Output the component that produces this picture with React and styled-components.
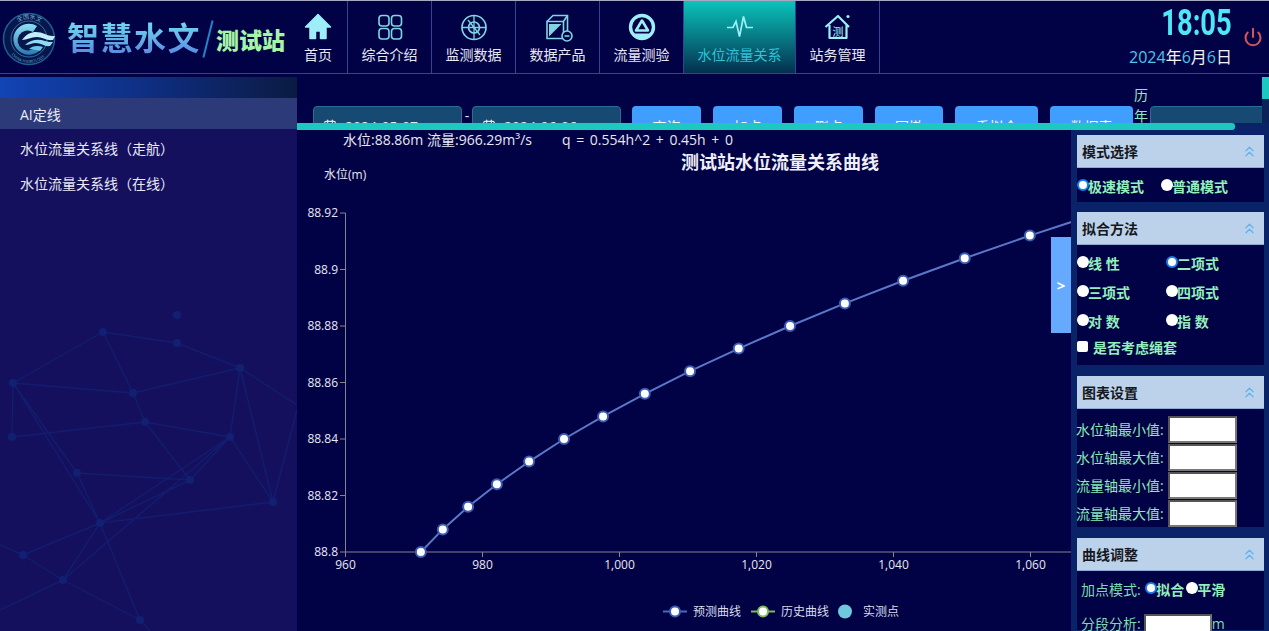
import React from 'react';
import styled, { createGlobalStyle } from 'styled-components';
import { Power, ChevronsUp, CalendarDays } from 'lucide-react';

const CJK = `"Open Sans", "Noto Sans CJK SC", sans-serif`;

const GlobalStyle = createGlobalStyle`
  html, body {
    margin: 0;
    height: 100%;
    overflow: hidden;
    background: #010145;
  }
  #root { height: 100%; }
  * { box-sizing: border-box; }
`;

const Page = styled.div`
  display: flex;
  flex-direction: column;
  height: 631px;
  font-family: ${CJK};
  color: #e6e8f4;
  background: #010145;
`;

/* header */
const Header = styled.header`
  display: flex;
  flex: none;
  height: 74px;
  border-top: 1px solid #a9a9c4;
  border-bottom: 1px solid #2b478f;
`;

const Brand = styled.div`
  display: flex;
  align-items: center;
  width: 302px;
  padding: 2px 0 0 1px;
`;

const BrandName = styled.div`
  margin-left: 10px;
  font-size: 32px;
  line-height: 40px;
  font-weight: 700;
  letter-spacing: 1.5px;
  white-space: nowrap;
  background: linear-gradient(180deg, #6fd6ee 15%, #5c8fe2 85%);
  -webkit-background-clip: text;
  background-clip: text;
  color: transparent;
`;

const Slash = styled.span`
  width: 2px;
  height: 38px;
  margin: 2px 0 0 6px;
  background: #1f86c8;
  transform: rotate(14deg);
`;

const Station = styled.div`
  margin: 4px 0 0 7px;
  font-size: 23px;
  line-height: 30px;
  font-weight: 900;
  white-space: nowrap;
  color: #a4f5a8;
`;

const Nav = styled.nav`
  display: flex;
`;

const NavItem = styled.div`
  display: flex;
  flex-direction: column;
  align-items: center;
  width: ${p => (p.$home ? 46 : p.$active ? 112 : 84)}px;
  padding: ${p => (p.$home ? '11px 13px 0 0' : '11px 0 0')};
  border-right: 1px solid #2b478f;
  font-size: 14px;
  line-height: 20px;
  white-space: nowrap;
  color: ${p => (p.$active ? '#2cc4d8' : '#e6e8f4')};
  background: ${p => (p.$active ? 'linear-gradient(180deg, #0ac4ba 0%, #04304f 100%)' : 'none')};
`;

const NavIcon = styled.svg`
  flex: none;
  width: 30px;
  height: 30px;
  margin-bottom: 3px;
  color: #9deef8;
`;

const Clock = styled.div`
  display: flex;
  flex-direction: column;
  align-items: flex-end;
  margin-left: auto;
  padding: 3px 37px 0 0;
  position: relative;
`;

const Time = styled.div`
  font-family: Roboto, sans-serif;
  font-size: 36px;
  line-height: 39px;
  font-weight: 700;
  color: #4fe6f6;
  transform: scaleX(0.76);
  transform-origin: right center;
`;

const DateText = styled.div`
  margin-top: 3px;
  font-size: 16px;
  line-height: 22px;
  white-space: nowrap;
  color: #f0f2f8;
  b { font-weight: 400; color: #49c6ee; }
`;

const PowerBtn = styled.span`
  position: absolute;
  right: 6px;
  top: 26px;
  display: flex;
  color: #d8545a;
`;

/* body */
const Body = styled.div`
  display: flex;
  flex: 1;
  min-height: 0;
`;

const Sidebar = styled.aside`
  position: relative;
  flex: none;
  width: 297px;
  margin-top: 3px;
  overflow: hidden;
  background: #14105e;
`;

const SideTop = styled.div`
  height: 21px;
  background: linear-gradient(90deg, #1244b4 0%, #0e2c7c 55%, #0a1a42 100%);
`;

const SideItem = styled.div`
  position: relative;
  height: ${p => (p.$active ? '31px' : '35px')};
  padding-left: 20px;
  font-size: 14px;
  line-height: ${p => (p.$active ? '33px' : '40px')};
  color: #e8eaf6;
  background: ${p => (p.$active ? '#2d3a7a' : 'none')};
`;

const Network = styled.svg`
  position: absolute;
  left: 0;
  bottom: 0;
  width: 297px;
  height: 331px;
`;

const Content = styled.main`
  position: relative;
  display: flex;
  flex: 1;
  flex-direction: column;
  min-width: 0;
`;

const Toolbar = styled.div`
  display: flex;
  flex: none;
  align-items: flex-start;
  height: 49px;
  padding: 32px 0 0 16px;
  overflow: hidden;
`;

const DateBox = styled.div`
  display: flex;
  flex: none;
  align-items: center;
  gap: 8px;
  width: 149px;
  height: 40px;
  padding-left: 9px;
  border: 1px solid #2a6c9c;
  border-radius: 4px;
  background: #164a72;
  font-size: 14px;
  color: #e4eaf2;
`;

const Dash = styled.span`
  flex: none;
  width: 10px;
  font-size: 14px;
  line-height: 20px;
  text-align: center;
`;

const ToolButton = styled.button`
  flex: none;
  width: ${p => p.$w}px;
  height: 40px;
  margin: ${p => p.$m || '0 0 0 12px'};
  border: 0;
  border-radius: 4px;
  background: #409eff;
  font: inherit;
  font-size: 14px;
  color: #fff;
`;

const YearLabel = styled.span`
  flex: none;
  width: 14px;
  margin: -22px 2px 0 1px;
  font-size: 14px;
  line-height: 21px;
  color: #8fe8b8;
`;

const YearSelect = styled.div`
  flex: none;
  width: 130px;
  height: 40px;
  border: 1px solid #2a6c9c;
  border-radius: 4px;
  background: #164a72;
`;

const HBar = styled.div`
  flex: none;
  height: 7px;
  background: #0a2268;
`;

const HThumb = styled.div`
  width: 938px;
  height: 7px;
  border-radius: 0 3px 3px 0;
  background: #1cc8c0;
`;

const VBar = styled.div`
  position: absolute;
  top: 3px;
  right: 0;
  width: 7px;
  height: 46px;
  background: #0b2258;
`;

const VThumb = styled.div`
  height: 22px;
  background: #1cc8c0;
`;

const Work = styled.div`
  display: flex;
  flex: 1;
  min-height: 0;
`;

const ChartPane = styled.section`
  position: relative;
  flex: 1;
  min-width: 0;
  overflow: hidden;
`;

const Info = styled.div`
  display: flex;
  height: 22px;
  padding: 0 0 0 46px;
  font-size: 14px;
  line-height: 20px;
  white-space: pre;
  color: #e6e8f4;
`;

const Formula = styled.span`
  margin-left: 30px;
  word-spacing: 2px;
`;

const ChartSvg = styled.svg`
  display: block;
  width: 774px;
  height: 479px;
  font-family: ${CJK};
`;

const Expand = styled.div`
  position: absolute;
  right: 0;
  top: 107px;
  display: flex;
  align-items: center;
  justify-content: center;
  width: 20px;
  height: 96px;
  background: #66aaff;
  font-size: 15px;
  font-weight: 700;
  color: #fff;
`;

/* right panel */
const Panel = styled.aside`
  flex: none;
  width: 198px;
  padding: 5px 5px 0 6px;
  overflow: hidden;
  background: #0a2268;
`;

const Section = styled.div`
  margin-bottom: ${p => p.$mb}px;
  background: #010145;
`;

const SectionHead = styled.div`
  display: flex;
  align-items: center;
  justify-content: space-between;
  height: 33px;
  padding: 0 6px 0 5px;
  border-bottom: 1px solid #8fa8d8;
  background: #bcd2ea;
  font-size: 14px;
  font-weight: 700;
  color: #151822;
  svg { color: #62b4f0; }
`;

const RadioRow = styled.div`
  display: grid;
  grid-template-columns: ${p => p.$cols};
  row-gap: ${p => p.$gap || 0}px;
  padding: ${p => p.$pad};
`;

const RadioLabel = styled.label`
  display: flex;
  align-items: flex-start;
  margin-left: ${p => p.$ml || 0}px;
  font-size: 14px;
  line-height: 20px;
  font-weight: 700;
  white-space: pre;
  color: #93f0bc;
`;

const Radio = styled.input.attrs({ type: 'radio' })`
  appearance: none;
  flex: none;
  width: 12px;
  height: 12px;
  margin: 2px -1px 0 0;
  border-radius: 50%;
  background: #fff;
  &:checked { border: 2px solid #1a7cf0; }
`;

const CheckRow = styled.label`
  display: flex;
  align-items: flex-start;
  gap: 5px;
  padding: 0 0 7px 0;
  font-size: 14px;
  line-height: 20px;
  font-weight: 700;
  color: #93f0bc;
`;

const Check = styled.input.attrs({ type: 'checkbox' })`
  appearance: none;
  flex: none;
  width: 11px;
  height: 11px;
  margin: 3px 0 0 0;
  border-radius: 2px;
  background: #fff;
`;

const Fields = styled.div`
  margin-left: -1px;
  padding-top: 6px;
`;

const FieldRow = styled.div`
  display: flex;
  align-items: center;
  height: 28px;
  font-size: 14px;
  white-space: nowrap;
  color: #88eab8;
`;

const NumInput = styled.input`
  flex: none;
  width: ${p => p.$w}px;
  height: 27px;
  margin-left: ${p => p.$ml}px;
  padding: 0;
  border: 2px solid #6a6a6e;
  border-color: #55555a #77777c #77777c #55555a;
  background: #fff;
`;

const AdjustRow = styled.div`
  display: flex;
  align-items: flex-start;
  padding: 9px 0 0 4px;
  font-size: 14px;
  line-height: 20px;
  white-space: pre;
  color: #7fdcb2;
`;

const SegmentRow = styled.div`
  display: flex;
  align-items: flex-start;
  height: 30px;
  padding: 14px 0 0 4px;
  font-size: 14px;
  line-height: 20px;
  white-space: nowrap;
  color: #7fdcb2;
`;

/* chart data, q / h */
const points = [
  [971.0, 88.8], [974.2, 88.808], [977.9, 88.816], [982.1, 88.824], [986.8, 88.832],
  [991.9, 88.84], [997.6, 88.848], [1003.7, 88.856], [1010.3, 88.864], [1017.4, 88.872],
  [1024.9, 88.88], [1032.9, 88.888], [1041.4, 88.896], [1050.4, 88.904], [1059.9, 88.912],
];
const px = q => 48.5 + (q - 960) * 6.85;
const py = h => 400 - (h - 88.8) * 2825;
const xTicks = [960, 980, 1000, 1020, 1040, 1060];
const yTicks = [88.8, 88.82, 88.84, 88.86, 88.88, 88.9, 88.92];
const linePath = points.map(([q, h]) => `${px(q)},${py(h)}`).join(' ') + ` ${px(1070)},${py(88.92)}`;

function Chart() {
  return (
    <ChartSvg viewBox="0 0 774 479">
      <text x="483" y="17" textAnchor="middle" fontSize="18" fontWeight="700" fill="#eef0f8">测试站水位流量关系曲线</text>
      <text x="27" y="27" fontSize="12" fill="#e6e8f4">水位(m)</text>
      <path d={`M48.5 ${py(88.92)}V400H774`} fill="none" stroke="#85858f" />
      {yTicks.map(v => (
        <g key={v}>
          <path d={`M43 ${py(v)}H48.5`} stroke="#85858f" />
          <text x="41" y={py(v) + 4} textAnchor="end" fontSize="12" fill="#e6e8f4">{v}</text>
        </g>
      ))}
      {xTicks.map(v => (
        <g key={v}>
          <path d={`M${px(v)} 400V405`} stroke="#85858f" />
          <text x={px(v)} y="417" textAnchor="middle" fontSize="12" fill="#e6e8f4">{v.toLocaleString('en-US')}</text>
        </g>
      ))}
      <polyline points={linePath} fill="none" stroke="#5b77c8" strokeWidth="2" />
      {points.map(([q, h]) => (
        <circle key={q} cx={px(q)} cy={py(h)} r="5" fill="#fff" stroke="#3d5cb4" strokeWidth="2" />
      ))}
      <path d="M366 459.5H390" stroke="#4a68bc" strokeWidth="2" />
      <circle cx="378" cy="459.5" r="5" fill="#fff" stroke="#3d5cb4" strokeWidth="2" />
      <text x="396" y="464" fontSize="12" fill="#d8dcec">预测曲线</text>
      <path d="M454 459.5H478" stroke="#7fb860" strokeWidth="2" />
      <circle cx="466" cy="459.5" r="5" fill="#fff" stroke="#7fb860" strokeWidth="2" />
      <text x="484" y="464" fontSize="12" fill="#d8dcec">历史曲线</text>
      <circle cx="548" cy="459.5" r="7" fill="#70c8dc" />
      <text x="566" y="464" fontSize="12" fill="#d8dcec">实测点</text>
    </ChartSvg>
  );
}

function Logo() {
  return (
    <svg width="56" height="56" viewBox="0 0 56 56" style={{ flex: 'none' }}>
      <defs>
        <linearGradient id="lg" x1="0" y1="0" x2="0" y2="1">
          <stop offset="0" stopColor="#8fe0f4" />
          <stop offset="1" stopColor="#2a78b4" />
        </linearGradient>
        <path id="ringTop" d="M7 30A21 21 0 0 1 49 30" />
        <path id="ringBottom" d="M5 30A23 23 0 0 0 51 30" />
      </defs>
      <circle cx="28" cy="29" r="25.5" fill="#06174c" stroke="#1d5e92" strokeWidth="1.5" />
      <circle cx="28" cy="29" r="18" fill="none" stroke="#3c86b8" strokeWidth="0.8" />
      <text fontSize="6" fill="#7fb8d8"><textPath href="#ringTop" startOffset="32%">全国水文</textPath></text>
      <text fontSize="4" fill="#6aa4c8"><textPath href="#ringBottom" startOffset="22%">CHINA HYDROLOGY</textPath></text>
      <path d="M36 16A15.5 15.5 0 1 0 38 41L35 36A10 10 0 1 1 32 22Z" fill="url(#lg)" />
      <path d="M21 30C28 20 37 21 44 24C48 26 51 26 54 26L52 30C46 31 41 27 36 27C30 27 26 30 21 30Z" fill="#bfeefa" />
      <path d="M24 35C30 29 38 29 44 31C47 32 50 32 52 32L49 36C44 37 40 33 35 33C31 33 28 35 24 35Z" fill="#8fdcf2" />
      <path d="M28 39C33 35 38 36 42 37L39 41C36 40 32 39 28 39Z" fill="#6cc6e8" />
    </svg>
  );
}

const icons = {
  home: (
    <path
      fill="currentColor"
      stroke="currentColor"
      strokeWidth="1.5"
      strokeLinejoin="round"
      d="M15 2.5 2.5 15H7v11.5h5.5V19h5v7.5H23V15h4.5Z"
    />
  ),
  intro: (
    <g fill="none" stroke="#7fd4e4" strokeWidth="1.6">
      <rect x="4" y="3.5" width="10" height="10.5" rx="3" />
      <rect x="16.5" y="3.5" width="10" height="10.5" rx="3" />
      <rect x="4" y="16.5" width="10" height="10.5" rx="3" />
      <rect x="16.5" y="16.5" width="10" height="10.5" rx="3" />
    </g>
  ),
  monitor: (
    <g fill="none" stroke="#7fd4e4" strokeWidth="1.7">
      <circle cx="15" cy="15.5" r="12" />
      <circle cx="15" cy="15.5" r="5.5" />
      <path d="M15 4v23M3 15.5h24M9 8l12 15" strokeWidth="1.3" />
    </g>
  ),
  product: (
    <g fill="none" stroke="#7fd4e4" strokeWidth="1.6">
      <path d="M4 9.5 10 3.5h14.5v15l-4 4" />
      <path d="M4 9.5h16.5v17H4ZM20.5 9.5l4-6" />
      <path d="M6 24.5V12h12.5Z" fill="#7fd4e4" stroke="none" />
      <circle cx="24" cy="24" r="5" fill="#010145" />
      <path d="M21.5 24h5" />
    </g>
  ),
  flow: (
    <g>
      <circle cx="15" cy="15" r="11.5" fill="#010145" stroke="currentColor" strokeWidth="3.4" />
      <path d="M15 8.5 21 18.5H9Z" fill="#010145" stroke="currentColor" strokeWidth="2.6" strokeLinejoin="round" />
      <path d="M6.5 21.5h17c-2 3-5 4.5-8.5 4.5s-6.5-1.5-8.5-4.5Z" fill="currentColor" />
    </g>
  ),
  relation: (
    <path fill="none" stroke="currentColor" strokeWidth="1.7" d="M2 15.5h6l3-6 3.5 15 4-20 3 11h6.5" />
  ),
  station: (
    <g>
      <path fill="none" stroke="currentColor" strokeWidth="2.2" strokeLinejoin="round" d="M2.5 15 15 4l11 11M6.5 13v13h17V13" />
      <circle cx="25" cy="4.5" r="1.6" fill="currentColor" />
      <text x="15" y="24" textAnchor="middle" fontSize="11" fill="currentColor">测</text>
    </g>
  ),
};

const navItems = [
  { key: 'home', label: '首页', home: true },
  { key: 'intro', label: '综合介绍' },
  { key: 'monitor', label: '监测数据' },
  { key: 'product', label: '数据产品' },
  { key: 'flow', label: '流量测验' },
  { key: 'relation', label: '水位流量关系', active: true },
  { key: 'station', label: '站务管理' },
];

const buttons = [
  ['查询', 69, '0 0 0 11px'],
  ['加点', 69],
  ['删点', 69],
  ['回撤', 68],
  ['重拟合', 83],
  ['数据表', 83],
];

function Head({ title }) {
  return (
    <SectionHead>
      {title}
      <ChevronsUp size={17} strokeWidth={1.8} />
    </SectionHead>
  );
}

const nodes = {
  a: [103, 32], b: [177, 43], c: [240, 68], d: [133, 93], e: [13, 83], f: [12, 137],
  g: [145, 122], h: [230, 137], i: [190, 180], j: [77, 173], k: [100, 223], l: [273, 202],
  m: [63, 280], n: [23, 255], o: [140, 320], p: [177, 15],
};
const edges = 'ab bc ad ae ef ed ej fg dg dc gh gi ch hi hl ji jk ki kl km kn kh mn mo mh ek cl'.split(' ');

function SideNetwork() {
  const lines = edges
    .map(pair => `M${nodes[pair[0]].join(' ')}L${nodes[pair[1]].join(' ')}`)
    .join('') + 'M100 223L140 320L150 331M63 280L0 310M23 255L0 245M273 202L297 110M240 68L297 105';
  return (
    <Network viewBox="0 0 297 331">
      <path d={lines} fill="none" stroke="#122072" strokeWidth="1.4" opacity="0.85" />
      {Object.entries(nodes).map(([id, [x, y]]) => (
        <circle key={id} cx={x} cy={y} r="4" fill="#122072" />
      ))}
    </Network>
  );
}

export default function App() {
  return (
    <Page>
      <GlobalStyle />
      <Header>
        <Brand>
          <Logo />
          <BrandName>智慧水文</BrandName>
          <Slash />
          <Station>测试站</Station>
        </Brand>
        <Nav>
          {navItems.map(item => (
            <NavItem key={item.key} $home={item.home} $active={item.active}>
              <NavIcon viewBox="0 0 30 30">{icons[item.key]}</NavIcon>
              {item.label}
            </NavItem>
          ))}
        </Nav>
        <Clock>
          <Time>18:05</Time>
          <DateText><b>2024</b>年<b>6</b>月<b>6</b>日</DateText>
          <PowerBtn><Power size={20} strokeWidth={2.4} /></PowerBtn>
        </Clock>
      </Header>
      <Body>
        <Sidebar>
          <SideNetwork />
          <SideTop />
          <SideItem $active>AI定线</SideItem>
          <SideItem>水位流量关系线（走航）</SideItem>
          <SideItem>水位流量关系线（在线）</SideItem>
        </Sidebar>
        <Content>
          <Toolbar>
            <DateBox><CalendarDays size={14} />2024-05-07</DateBox>
            <Dash>-</Dash>
            <DateBox><CalendarDays size={14} />2024-06-06</DateBox>
            {buttons.map(([label, w, m]) => (
              <ToolButton key={label} $w={w} $m={m}>{label}</ToolButton>
            ))}
            <YearLabel>历年</YearLabel>
            <YearSelect />
          </Toolbar>
          <VBar><VThumb /></VBar>
          <HBar><HThumb /></HBar>
          <Work>
            <ChartPane>
              <Info>水位:88.86m 流量:966.29m³/s<Formula>q = 0.554h^2 + 0.45h + 0</Formula></Info>
              <Chart />
              <Expand>&gt;</Expand>
            </ChartPane>
            <Panel>
              <Section $mb={10}>
                <Head title="模式选择" />
                <RadioRow $cols="84px 1fr" $pad="9px 0 5px 0">
                  <RadioLabel><Radio name="mode" defaultChecked />极速模式</RadioLabel>
                  <RadioLabel><Radio name="mode" />普通模式</RadioLabel>
                </RadioRow>
              </Section>
              <Section $mb={11}>
                <Head title="拟合方法" />
                <RadioRow $cols="89px 1fr" $gap={9} $pad="9px 0 6px 0">
                  <RadioLabel><Radio name="fit" />线 性</RadioLabel>
                  <RadioLabel><Radio name="fit" defaultChecked />二项式</RadioLabel>
                  <RadioLabel><Radio name="fit" />三项式</RadioLabel>
                  <RadioLabel><Radio name="fit" />四项式</RadioLabel>
                  <RadioLabel><Radio name="fit" />对 数</RadioLabel>
                  <RadioLabel><Radio name="fit" />指 数</RadioLabel>
                </RadioRow>
                <CheckRow><Check />是否考虑绳套</CheckRow>
              </Section>
              <Section $mb={11}>
                <Head title="图表设置" />
                <Fields>
                  {['水位轴最小值:', '水位轴最大值:', '流量轴最小值:', '流量轴最大值:'].map(label => (
                    <FieldRow key={label}>{label}<NumInput $w={69} $ml={4} /></FieldRow>
                  ))}
                </Fields>
              </Section>
              <Section $mb={0}>
                <Head title="曲线调整" />
                <AdjustRow>
                  {'加点模式: '}
                  <RadioLabel $ml={1}><Radio name="add" defaultChecked />拟合</RadioLabel>
                  <RadioLabel $ml={2}><Radio name="add" />平滑</RadioLabel>
                </AdjustRow>
                <SegmentRow>分段分析:<NumInput $w={68} $ml={3} />m</SegmentRow>
              </Section>
            </Panel>
          </Work>
        </Content>
      </Body>
    </Page>
  );
}
